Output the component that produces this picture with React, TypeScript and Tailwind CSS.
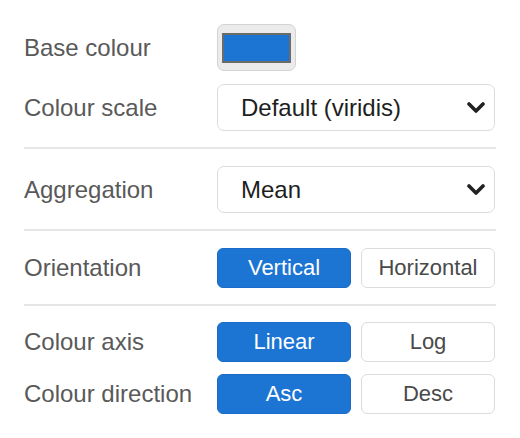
import React from 'react';

const font = { fontFamily: '"Liberation Sans", Arial, sans-serif' };

const Chevron = () => (
  <svg width="18" height="14" viewBox="0 0 18 14" className="shrink-0">
    <polyline points="2,3 9,10 16,3" fill="none" stroke="#222" strokeWidth="3.6" strokeLinecap="round" strokeLinejoin="round" />
  </svg>
);

const Label = ({ children }: { children: React.ReactNode }) => (
  <div className="w-[193px] shrink-0 text-[24px] text-[#595959] leading-none">{children}</div>
);

const Select = ({ value }: { value: string }) => (
  <div className="flex h-[47px] w-[278px] items-center justify-between rounded-[7px] border border-[#dcdcdc] bg-white pl-[23px] pr-[9px]">
    <span className="text-[24px] leading-none text-[#1e1e1e]">{value}</span>
    <Chevron />
  </div>
);

const Toggle = ({ options, active }: { options: string[]; active: number }) => (
  <div className="flex h-[40px] w-[278px] gap-[10px]">
    {options.map((o, i) => (
      <div
        key={o}
        className={`flex flex-1 items-center justify-center rounded-[6px] border text-[22px] leading-none ${
          i === active ? 'border-[#1a6cc8] bg-[#1c74d3] text-white' : 'border-[#dcdcdc] bg-white text-[#4a4a4a]'
        }`}
      >
        {o}
      </div>
    ))}
  </div>
);

const Divider = () => <div className="h-[2px] bg-[#e6e6e6]" />;

export default function App() {
  return (
    <div style={font} className="h-[438px] w-[520px] bg-white px-[24px] pt-[24px]">
      <div className="flex items-center">
        <Label>Base colour</Label>
        <div className="flex h-[47px] w-[79px] items-center justify-center rounded-[7px] border border-[#d3d3d3] bg-[#ebebeb]">
          <div className="h-[30px] w-[69px] border-2 border-[#6b6b6b] bg-[#1c74d3]" />
        </div>
      </div>
      <div className="mt-[13px] flex items-center">
        <Label>Colour scale</Label>
        <Select value="Default (viridis)" />
      </div>
      <div className="mt-[16px] mb-[17px]">
        <Divider />
      </div>
      <div className="flex items-center">
        <Label>Aggregation</Label>
        <Select value="Mean" />
      </div>
      <div className="mt-[16px] mb-[17px]">
        <Divider />
      </div>
      <div className="flex items-center">
        <Label>Orientation</Label>
        <Toggle options={['Vertical', 'Horizontal']} active={0} />
      </div>
      <div className="mt-[16px] mb-[16px]">
        <Divider />
      </div>
      <div className="flex items-center">
        <Label>Colour axis</Label>
        <Toggle options={['Linear', 'Log']} active={0} />
      </div>
      <div className="mt-[12px] flex items-center">
        <Label>Colour direction</Label>
        <Toggle options={['Asc', 'Desc']} active={0} />
      </div>
    </div>
  );
}
